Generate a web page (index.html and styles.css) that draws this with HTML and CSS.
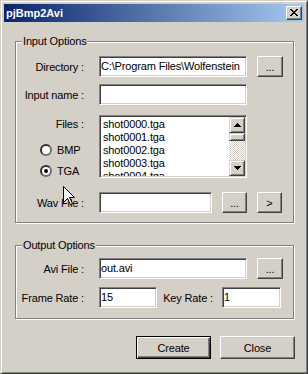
FILE: index.html
```html
<!DOCTYPE html>
<html lang="en">
  <head>
    <meta charset="UTF-8" />
    <meta name="viewport" content="width=device-width, initial-scale=1.0" />
    <title>pjBmp2Avi</title>
    <link rel="stylesheet" href="styles.css">
  </head>
  <body>
    <div class="window">
      <div class="titlebar">
        <span class="title">pjBmp2Avi</span>
        <div class="close-box">
          <svg width="8" height="7" viewBox="0 0 8 7" shape-rendering="crispEdges">
            <path d="M0 0h2v1h-2zM6 0h2v1h-2zM1 1h2v1h-2zM5 1h2v1h-2zM2 2h4v1h-4zM3 3h2v1h-2zM2 4h4v1h-4zM1 5h2v1h-2zM5 5h2v1h-2zM0 6h2v1h-2zM6 6h2v1h-2z" fill="#000"/>
          </svg>
        </div>
      </div>

      <div class="dialog">
        <!-- Input Options -->
        <div class="group input-group">
          <div class="group-title">Input Options</div>
          <div class="row row-dir">
            <span class="lbl">Directory :</span>
            <div class="edit edit-wide">C:\Program Files\Wolfenstein</div>
            <div class="btn btn-browse">...</div>
          </div>
          <div class="row row-name">
            <span class="lbl">Input name :</span>
            <div class="edit edit-wide"></div>
          </div>
          <div class="row row-files">
            <div class="side">
              <span class="lbl files-lbl">Files :</span>
              <div class="radio-row radio-bmp"><span class="radio"></span>BMP</div>
              <div class="radio-row radio-tga"><span class="radio checked"></span>TGA</div>
            </div>
            <div class="listbox">
              <div class="items">
                <div>shot0000.tga</div>
                <div>shot0001.tga</div>
                <div>shot0002.tga</div>
                <div>shot0003.tga</div>
                <div>shot0004.tga</div>
              </div>
              <div class="scrollbar">
                <div class="sb-btn">
                  <svg width="7" height="4" viewBox="0 0 7 4" shape-rendering="crispEdges"><path d="M3 0h1v1h-1zM2 1h3v1h-3zM1 2h5v1h-5zM0 3h7v1h-7z" fill="#000"/></svg>
                </div>
                <div class="sb-track"><div class="sb-thumb"></div></div>
                <div class="sb-btn">
                  <svg width="7" height="4" viewBox="0 0 7 4" shape-rendering="crispEdges"><path d="M0 0h7v1h-7zM1 1h5v1h-5zM2 2h3v1h-3zM3 3h1v1h-1z" fill="#000"/></svg>
                </div>
              </div>
            </div>
          </div>
          <div class="row row-wav">
            <span class="lbl">Wav File :</span>
            <div class="edit edit-wav"></div>
            <div class="btn btn-small">...</div>
            <div class="btn btn-small">&gt;</div>
          </div>
        </div>

        <!-- Output Options -->
        <div class="group output-group">
          <div class="group-title">Output Options</div>
          <div class="row row-avi">
            <span class="lbl">Avi File :</span>
            <div class="edit edit-wide">out.avi</div>
            <div class="btn btn-browse">...</div>
          </div>
          <div class="row row-rate">
            <span class="lbl">Frame Rate :</span>
            <div class="edit edit-frame">15</div>
            <span class="lbl lbl-key">Key Rate :</span>
            <div class="edit edit-key">1</div>
          </div>
        </div>

        <div class="actions">
          <div class="btn btn-action btn-default">Create</div>
          <div class="btn btn-action">Close</div>
        </div>
      </div>

      <svg class="cursor" width="12" height="20" viewBox="0 0 12 20">
        <path d="M0.5 0.5V16.5L4.5 12.5L7.5 18.5L9.5 17.5L6.5 11.5H11.5Z" fill="#fff" stroke="#000" stroke-width="1" stroke-linejoin="miter"/>
      </svg>
    </div>
  </body>
</html>
```

FILE: styles.css
```css
body {
  margin: 0;
  padding: 0;
  font-family: "Liberation Sans", Arial, sans-serif;
  font-size: 11px;
  letter-spacing: -0.15px;
  color: #000;
  background-color: #d4d0c8;
}
.window {
  position: relative;
  width: 308px;
  height: 374px;
  box-sizing: border-box;
  border: 1px solid;
  border-color: #d4d0c8 #404040 #404040 #d4d0c8;
  box-shadow: inset 1px 1px 0 #fff, inset -1px -1px 0 #808080;
  padding: 3px;
  background-color: #d4d0c8;
}
.titlebar {
  height: 18px;
  display: flex;
  align-items: center;
  justify-content: space-between;
  padding: 0 2px 0 2px;
  background: linear-gradient(to right, #0a246a, #a6caf0);
}
.title {
  color: #fff;
  font-weight: bold;
  font-size: 11px;
  letter-spacing: 0;
}
.close-box {
  width: 16px;
  height: 14px;
  box-sizing: border-box;
  border: 1px solid;
  border-color: #fff #404040 #404040 #fff;
  box-shadow: inset -1px -1px 0 #808080;
  background-color: #d4d0c8;
  display: flex;
  align-items: center;
  justify-content: center;
  padding: 0 1px 1px 0;
}
.close-box svg {
  display: block;
}
.dialog {
  padding: 19px 0 0 11px;
}
.group {
  position: relative;
  width: 279px;
  box-sizing: border-box;
  border: 1px solid #808080;
  box-shadow: inset 1px 1px 0 #fff, 1px 1px 0 #fff;
}
.group-title {
  position: absolute;
  top: -7px;
  left: 6px;
  padding: 0 1px;
  line-height: 13px;
  background-color: #d4d0c8;
}
.input-group {
  padding: 14px 0 9px 0;
}
.output-group {
  margin-top: 22px;
  padding: 12px 0 10px 0;
}
.row {
  display: flex;
  align-items: center;
}
.lbl {
  width: 68px;
  margin-right: 15px;
  text-align: right;
  white-space: nowrap;
}
.row-dir {
  margin-bottom: 7px;
}
.row-name {
  margin-bottom: 10px;
}
.row-files {
  align-items: flex-start;
  height: 63px;
  margin-bottom: 14px;
}
.row-avi {
  margin-bottom: 8px;
}
.edit {
  height: 21px;
  box-sizing: border-box;
  border: 1px solid;
  border-color: #808080 #fff #fff #808080;
  box-shadow: inset 1px 1px 0 #404040, inset -1px -1px 0 #d4d0c8;
  background-color: #fff;
  padding: 0 1px;
  line-height: 19px;
  white-space: nowrap;
  overflow: hidden;
}
.edit-wide {
  width: 148px;
}
.edit-wav {
  width: 113px;
}
.edit-frame {
  width: 58px;
}
.edit-key {
  width: 59px;
}
.lbl-key {
  width: 56px;
  margin-right: 9px;
}
.btn {
  box-sizing: border-box;
  border: 1px solid;
  border-color: #fff #404040 #404040 #fff;
  box-shadow: inset -1px -1px 0 #808080;
  background-color: #d4d0c8;
  display: flex;
  align-items: center;
  justify-content: center;
  height: 21px;
}
.btn-browse {
  width: 26px;
  margin-left: 10px;
}
.btn-small {
  width: 25px;
  margin-left: 10px;
}
.side {
  width: 68px;
  margin-right: 15px;
  display: flex;
  flex-direction: column;
}
.files-lbl {
  margin: 3px 0 0 0;
  line-height: 13px;
}
.radio-row {
  height: 13px;
  display: flex;
  align-items: center;
  padding-left: 24px;
}
.radio-bmp {
  margin-top: 12px;
}
.radio-tga {
  margin-top: 8px;
}
.radio {
  width: 12px;
  height: 12px;
  box-sizing: border-box;
  border-radius: 50%;
  border: 2px solid;
  border-color: #303030 #707070 #707070 #303030;
  background-color: #fff;
  margin-right: 5px;
  display: flex;
  align-items: center;
  justify-content: center;
}
.radio.checked::after {
  content: "";
  width: 4px;
  height: 4px;
  border-radius: 50%;
  background-color: #000;
}
.listbox {
  width: 148px;
  height: 63px;
  box-sizing: border-box;
  border: 1px solid;
  border-color: #808080 #fff #fff #808080;
  box-shadow: inset 1px 1px 0 #404040, inset -1px -1px 0 #d4d0c8;
  background-color: #fff;
  padding: 1px;
  display: flex;
}
.items {
  flex: 1;
  overflow: hidden;
  padding: 1px 0 0 2px;
  line-height: 13px;
}
.scrollbar {
  width: 16px;
  display: flex;
  flex-direction: column;
}
.sb-btn {
  height: 16px;
  box-sizing: border-box;
  border: 1px solid;
  border-color: #d4d0c8 #404040 #404040 #d4d0c8;
  box-shadow: inset 1px 1px 0 #fff, inset -1px -1px 0 #808080;
  background-color: #d4d0c8;
  display: flex;
  align-items: center;
  justify-content: center;
}
.sb-btn svg {
  display: block;
}
.sb-track {
  flex: 1;
  background-image: conic-gradient(#fff 25%, #d4d0c8 0 50%, #fff 0 75%, #d4d0c8 0);
  background-size: 2px 2px;
}
.sb-thumb {
  height: 8px;
  box-sizing: border-box;
  border: 1px solid;
  border-color: #d4d0c8 #404040 #404040 #d4d0c8;
  box-shadow: inset 1px 1px 0 #fff, inset -1px -1px 0 #808080;
  background-color: #d4d0c8;
}
.actions {
  width: 280px;
  margin-top: 17px;
  display: flex;
  justify-content: flex-end;
  gap: 9px;
}
.btn-action {
  width: 75px;
  height: 23px;
}
.btn-default {
  border: 1px solid #000;
  box-shadow: inset 1px 1px 0 #fff, inset -1px -1px 0 #404040, inset -2px -2px 0 #808080;
}
.cursor {
  position: absolute;
  left: 62px;
  top: 185px;
}
```
